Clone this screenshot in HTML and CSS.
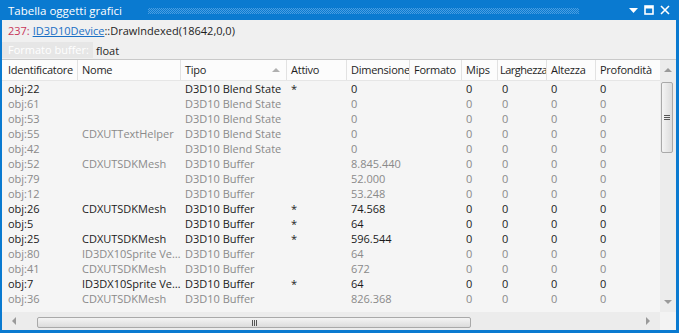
FILE: index.html
```html
<!DOCTYPE html>
<html lang="it">
<head>
    <meta charset="UTF-8">
    <title>Tabella oggetti grafici</title>
    <link rel="stylesheet" href="styles.css">
</head>
<body>
    <div class="window">
        <div class="titlebar">
            <span class="title">Tabella oggetti grafici</span>
            <span class="grip"></span>
            <span class="title-buttons">
                <svg width="9" height="5" viewBox="0 0 9 5"><path d="M0 0H9L4.5 5Z" fill="#fff"/></svg>
                <svg width="10" height="10" viewBox="0 0 10 10"><rect x="1" y="1" width="8" height="8" fill="none" stroke="#fff" stroke-width="1.6"/><rect x="1" y="1" width="8" height="2.5" fill="#fff"/></svg>
                <svg width="10" height="10" viewBox="0 0 10 10"><path d="M1 1L9 9M9 1L1 9" stroke="#fff" stroke-width="1.6"/></svg>
            </span>
        </div>

        <div class="info">
            <div class="call"><span class="call-id">237:</span> <a class="call-link">ID3D10Device</a>::DrawIndexed(18642,0,0)</div>
            <div class="format"><span class="format-label">Formato buffer:</span> float</div>
        </div>

        <div class="grid-area">
            <div class="table">
                <div class="row header">
                    <div class="cell">Identificatore</div>
                    <div class="cell">Nome</div>
                    <div class="cell sorted">Tipo<span class="sort-arrow"></span></div>
                    <div class="cell">Attivo</div>
                    <div class="cell">Dimensione</div>
                    <div class="cell">Formato</div>
                    <div class="cell">Mips</div>
                    <div class="cell tight">Larghezza</div>
                    <div class="cell">Altezza</div>
                    <div class="cell">Profondità</div>
                </div>
                <div class="row active">
                    <div class="cell">obj:22</div><div class="cell"></div><div class="cell">D3D10 Blend State</div><div class="cell">*</div><div class="cell">0</div><div class="cell"></div><div class="cell">0</div><div class="cell">0</div><div class="cell">0</div><div class="cell">0</div>
                </div>
                <div class="row">
                    <div class="cell">obj:61</div><div class="cell"></div><div class="cell">D3D10 Blend State</div><div class="cell"></div><div class="cell">0</div><div class="cell"></div><div class="cell">0</div><div class="cell">0</div><div class="cell">0</div><div class="cell">0</div>
                </div>
                <div class="row">
                    <div class="cell">obj:53</div><div class="cell"></div><div class="cell">D3D10 Blend State</div><div class="cell"></div><div class="cell">0</div><div class="cell"></div><div class="cell">0</div><div class="cell">0</div><div class="cell">0</div><div class="cell">0</div>
                </div>
                <div class="row">
                    <div class="cell">obj:55</div><div class="cell">CDXUTTextHelper</div><div class="cell">D3D10 Blend State</div><div class="cell"></div><div class="cell">0</div><div class="cell"></div><div class="cell">0</div><div class="cell">0</div><div class="cell">0</div><div class="cell">0</div>
                </div>
                <div class="row">
                    <div class="cell">obj:42</div><div class="cell"></div><div class="cell">D3D10 Blend State</div><div class="cell"></div><div class="cell">0</div><div class="cell"></div><div class="cell">0</div><div class="cell">0</div><div class="cell">0</div><div class="cell">0</div>
                </div>
                <div class="row">
                    <div class="cell">obj:52</div><div class="cell">CDXUTSDKMesh</div><div class="cell">D3D10 Buffer</div><div class="cell"></div><div class="cell">8.845.440</div><div class="cell"></div><div class="cell">0</div><div class="cell">0</div><div class="cell">0</div><div class="cell">0</div>
                </div>
                <div class="row">
                    <div class="cell">obj:79</div><div class="cell"></div><div class="cell">D3D10 Buffer</div><div class="cell"></div><div class="cell">52.000</div><div class="cell"></div><div class="cell">0</div><div class="cell">0</div><div class="cell">0</div><div class="cell">0</div>
                </div>
                <div class="row">
                    <div class="cell">obj:12</div><div class="cell"></div><div class="cell">D3D10 Buffer</div><div class="cell"></div><div class="cell">53.248</div><div class="cell"></div><div class="cell">0</div><div class="cell">0</div><div class="cell">0</div><div class="cell">0</div>
                </div>
                <div class="row active">
                    <div class="cell">obj:26</div><div class="cell">CDXUTSDKMesh</div><div class="cell">D3D10 Buffer</div><div class="cell">*</div><div class="cell">74.568</div><div class="cell"></div><div class="cell">0</div><div class="cell">0</div><div class="cell">0</div><div class="cell">0</div>
                </div>
                <div class="row active">
                    <div class="cell">obj:5</div><div class="cell"></div><div class="cell">D3D10 Buffer</div><div class="cell">*</div><div class="cell">64</div><div class="cell"></div><div class="cell">0</div><div class="cell">0</div><div class="cell">0</div><div class="cell">0</div>
                </div>
                <div class="row active">
                    <div class="cell">obj:25</div><div class="cell">CDXUTSDKMesh</div><div class="cell">D3D10 Buffer</div><div class="cell">*</div><div class="cell">596.544</div><div class="cell"></div><div class="cell">0</div><div class="cell">0</div><div class="cell">0</div><div class="cell">0</div>
                </div>
                <div class="row">
                    <div class="cell">obj:80</div><div class="cell">ID3DX10Sprite Vertex Buffer</div><div class="cell">D3D10 Buffer</div><div class="cell"></div><div class="cell">64</div><div class="cell"></div><div class="cell">0</div><div class="cell">0</div><div class="cell">0</div><div class="cell">0</div>
                </div>
                <div class="row">
                    <div class="cell">obj:41</div><div class="cell">CDXUTSDKMesh</div><div class="cell">D3D10 Buffer</div><div class="cell"></div><div class="cell">672</div><div class="cell"></div><div class="cell">0</div><div class="cell">0</div><div class="cell">0</div><div class="cell">0</div>
                </div>
                <div class="row active">
                    <div class="cell">obj:7</div><div class="cell">ID3DX10Sprite Vertex Buffer</div><div class="cell">D3D10 Buffer</div><div class="cell">*</div><div class="cell">64</div><div class="cell"></div><div class="cell">0</div><div class="cell">0</div><div class="cell">0</div><div class="cell">0</div>
                </div>
                <div class="row">
                    <div class="cell">obj:36</div><div class="cell">CDXUTSDKMesh</div><div class="cell">D3D10 Buffer</div><div class="cell"></div><div class="cell">826.368</div><div class="cell"></div><div class="cell">0</div><div class="cell">0</div><div class="cell">0</div><div class="cell">0</div>
                </div>
            </div>

            <div class="vscroll">
                <span class="arrow arrow-up"></span>
                <div class="vtrack">
                    <div class="vthumb"><span class="vgrip"></span></div>
                </div>
                <span class="arrow arrow-down"></span>
            </div>
        </div>

        <div class="bottom">
            <div class="hscroll">
                <span class="arrow arrow-left"></span>
                <div class="htrack">
                    <div class="hthumb"><span class="hgrip"></span></div>
                </div>
                <span class="arrow arrow-right"></span>
            </div>
            <div class="corner"></div>
        </div>
    </div>
</body>
</html>
```

FILE: styles.css
```css
* { margin: 0; padding: 0; box-sizing: border-box; }
body {
    font-family: "Open Sans", "Noto Sans", sans-serif;
    font-size: 11px;
    color: #1e1e1e;
    background: #fff;
}
.window {
    width: 679px;
    height: 333px;
    display: flex;
    flex-direction: column;
    background: #f0f0f0;
    border-left: 2px solid #0a7ad0;
    border-right: 3px solid #0a7ad0;
    border-bottom: 3px solid #0a7ad0;
    overflow: hidden;
}

/* title bar */
.titlebar {
    height: 20px;
    flex: 0 0 20px;
    display: flex;
    align-items: center;
    background: #0a7ad0;
    color: #fff;
    padding-left: 6px;
    font-size: 11.5px;
}
.title { white-space: nowrap; }
.grip {
    flex: 1;
    height: 6px;
    margin: 1px 0 0 26px;
    background: repeating-conic-gradient(#4a9ee2 0 25%, transparent 0 50%) 0 0 / 2px 2px;
}
.title-buttons { display: flex; align-items: center; gap: 6px; padding: 0 6px 0 50px; }

/* info area */
.info { height: 40px; flex: 0 0 40px; border-bottom: 1px solid #c9c9c9; }
.call { height: 21px; line-height: 21px; padding-left: 6px; white-space: nowrap; font-size: 11px; }
.call-id { color: #c8365a; }
.call-link { color: #1a6fc4; text-decoration: underline; }
.format { height: 18px; display: flex; align-items: center; white-space: nowrap; font-size: 11px; }
.format-label {
    color: #fff;
    background: #e6e6e6;
    height: 16px;
    line-height: 16px;
    padding: 0 4px 0 6px;
    margin-right: 3px;
}

/* grid */
.grid-area { flex: 1; display: flex; min-height: 0; background: #f5f5f5; }
.table { flex: 1; overflow: hidden; }
.row {
    display: grid;
    grid-template-columns: 76px 103px 106px 60px 63px 52px 36px 49px 49px 80px;
    height: 15px;
    line-height: 15px;
    color: #8a8a8a;
}
.row.active { color: #1b1b1b; }
.cell {
    padding-left: 4px;
    white-space: nowrap;
    overflow: hidden;
    text-overflow: ellipsis;
}
.cell:first-child { padding-left: 6px; }
.row.header {
    height: 21px;
    line-height: 20px;
    color: #1e1e1e;
    background: #fcfcfc;
    border-bottom: 1px solid #e6e6e6;
    letter-spacing: -0.25px;
}
.header .cell { border-right: 1px solid #e2e2e2; text-overflow: clip; }
.header .tight { padding-left: 2px; letter-spacing: -0.5px; }
.header .sorted { display: flex; justify-content: space-between; align-items: center; padding-right: 6px; }
.sort-arrow {
    width: 0; height: 0;
    border-left: 4px solid transparent;
    border-right: 4px solid transparent;
    border-bottom: 4px solid #b0b0b0;
}

/* scrollbars */
.vscroll {
    width: 16px;
    flex: 0 0 16px;
    display: flex;
    flex-direction: column;
    align-items: center;
    background: #ececec;
}
.vtrack { flex: 1; width: 100%; padding: 6px 3px 0 1px; }
.vthumb {
    height: 71px;
    border: 1px solid #a9a9a9;
    border-radius: 2px;
    background: linear-gradient(90deg, #f4f4f4, #dcdcdc);
    display: flex;
    align-items: center;
    justify-content: center;
}
.vgrip { width: 6px; height: 5px; border-top: 1px solid #555; border-bottom: 1px solid #555; position: relative; }
.vgrip::after { content: ""; position: absolute; left: 0; right: 0; top: 1px; border-top: 1px solid #555; }

.arrow { width: 0; height: 0; flex: 0 0 auto; }
.arrow-up { margin: 8px 0 4px; border-left: 4px solid transparent; border-right: 4px solid transparent; border-bottom: 4px solid #9a9a9a; }
.arrow-down { margin: 4px 0 8px; border-left: 4px solid transparent; border-right: 4px solid transparent; border-top: 4px solid #9a9a9a; }
.arrow-left { margin: 0 4px 0 10px; border-top: 4px solid transparent; border-bottom: 4px solid transparent; border-right: 4px solid #9a9a9a; }
.arrow-right { margin: 0 10px 0 4px; border-top: 4px solid transparent; border-bottom: 4px solid transparent; border-left: 4px solid #9a9a9a; }

.bottom { height: 18px; flex: 0 0 18px; display: flex; }
.hscroll { flex: 1; display: flex; align-items: center; background: #ececec; }
.htrack { flex: 1; height: 100%; padding: 5px 0 1px 17px; }
.hthumb {
    width: 434px;
    height: 11px;
    border: 1px solid #a9a9a9;
    border-radius: 2px;
    background: linear-gradient(#f4f4f4, #dcdcdc);
    display: flex;
    align-items: center;
    justify-content: center;
}
.hgrip { width: 5px; height: 6px; border-left: 1px solid #555; border-right: 1px solid #555; position: relative; }
.hgrip::after { content: ""; position: absolute; top: 0; bottom: 0; left: 1px; border-left: 1px solid #555; }
.corner { width: 16px; flex: 0 0 16px; background: #f3f3f3; }
```
